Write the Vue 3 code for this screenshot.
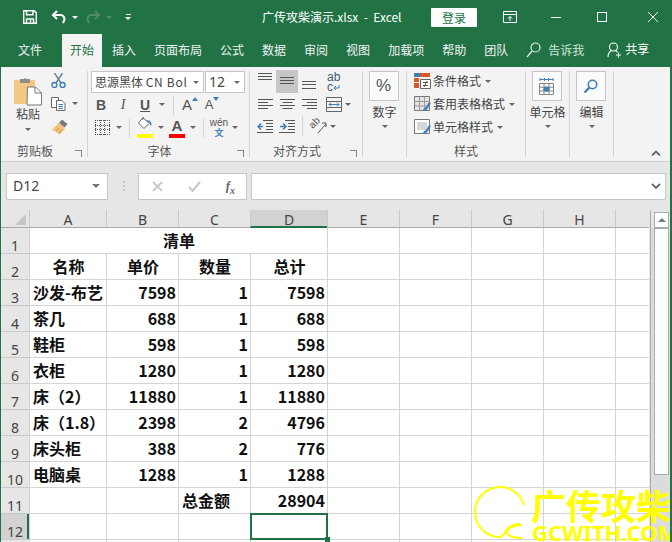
<template>
  <div class="window">
    <!-- title bar -->
    <div class="titlebar">
      <svg class="qa-save" width="16" height="16" viewBox="0 0 16 16" fill="none" stroke="#fff" stroke-width="1.4">
        <path d="M1.7 1.7h10.6l2 2v10.6H1.7z" />
        <path d="M4.5 1.7v4h6.5v-4M4.5 14.3V10h7v4.3" />
        <path d="M8.5 11v2.4" />
      </svg>
      <svg class="qa-undo" width="16" height="14" viewBox="0 0 16 14" fill="none" stroke="#fff" stroke-width="2">
        <path d="M6 1 2 5l4 4" />
        <path d="M2.5 5h7a4 4 0 0 1 3.6 5.6L12 13" />
      </svg>
      <span class="qa-caret"></span>
      <svg class="qa-redo" width="16" height="14" viewBox="0 0 16 14" fill="none" stroke="#4f8a6b" stroke-width="2">
        <path d="m10 1 4 4-4 4" />
        <path d="M13.5 5h-7a4 4 0 0 0-3.6 5.6L4 13" />
      </svg>
      <span class="qa-caret dim"></span>
      <span class="qa-more"><i></i><b></b></span>
      <span class="doc-title">广传攻柴演示.xlsx&nbsp;&nbsp;-&nbsp;&nbsp;Excel</span>
      <button class="login">登录</button>
      <svg class="win-ribbon" width="14" height="12" viewBox="0 0 14 12" fill="none" stroke="#fff">
        <path d="M.5.5h13v11H.5zM.5 3.500h13" />
        <path d="M7 10V5.500M5 7.500l2-2 2 2" />
      </svg>
      <span class="win-min"></span>
      <span class="win-max"></span>
      <svg class="win-close" width="12" height="12" viewBox="0 0 12 12" stroke="#fff"><path d="m1 1 10 10M11 1 1 11" /></svg>
    </div>

    <!-- tabs -->
    <div class="tabs">
      <span
        v-for="tab in tabs"
        :key="tab"
        class="tab"
        :class="{ active: tab === '开始', file: tab === '文件' }"
      >{{ tab }}</span>
      <svg class="tell-icon" width="15" height="16" viewBox="0 0 15 16" fill="none" stroke="#e6efe9" stroke-width="1.2">
        <circle cx="9.500" cy="5.500" r="4.500" />
        <path d="M6.200 9 1 15" />
      </svg>
      <span class="tell">告诉我</span>
      <svg class="share-icon" width="15" height="16" viewBox="0 0 15 16" fill="none" stroke="#fff" stroke-width="1.1">
        <circle cx="6.500" cy="5" r="4" />
        <path d="M1 15c0-3.500 1.800-5.500 3.500-6.500M8.500 8.500c.8.4 1.500 1 2 1.800M9 13h5M11.500 10.500v5" />
      </svg>
      <span class="share">共享</span>
    </div>

    <!-- ribbon -->
    <div class="ribbon">
      <section class="group g-clip">
        <div class="group-body clip-body">
          <div class="paste">
            <svg width="30" height="30" viewBox="0 0 30 30">
              <path d="M1 4h21v24H1z" fill="#f2c884" />
              <path d="M7 3h3.500a2 2 0 0 1 3 0H17v4H7V3z" fill="#8d8d8d" />
              <path d="M14.500 11h8l6 6v12h-14.500z" fill="#fff" stroke="#777" />
              <path d="M22 11v6h6.500" fill="none" stroke="#777" />
            </svg>
            <span class="big-label">粘贴</span>
            <span class="caret paste-caret"></span>
          </div>
          <div class="clip-tools">
            <svg width="15" height="15" viewBox="0 0 15 15" fill="none" stroke="#3f7fb5" stroke-width="1.400">
              <path d="M3.500 0 10 10M11.500 0 5 10" stroke="#6b7f90" />
              <circle cx="3.400" cy="12" r="2.500" />
              <circle cx="11.600" cy="12" r="2.500" />
            </svg>
            <div class="copy-row">
              <svg width="15" height="15" viewBox="0 0 15 15" fill="#fff" stroke="#666">
                <path d="M.5 1.500h7v10h-7z" />
                <path d="M5.500 4.500h5.500l3 3v7h-8.500z" />
                <path d="M7.500 8.500h4.500M7.500 10.500h4.500M7.500 12.500h4.500" stroke="#3f7fb5" />
              </svg>
              <span class="caret"></span>
            </div>
            <svg width="17" height="16" viewBox="0 0 17 16">
              <path d="M11 0.500 16.500 5 13.500 8.500 8 4z" fill="#7a7a7a" />
              <path d="M7 3.500 14 9.500 9 15.500 0.500 10.500c2-.5 3-1 3-3 1.500.5 2.500-1 3.500-4z" fill="#f2c27a" />
              <path d="M5 12l3-3M8 14l2.500-3.500" stroke="#c69a52" fill="none" />
            </svg>
          </div>
        </div>
        <div class="group-label with-launcher">剪贴板<i class="launcher"></i></div>
      </section>

      <section class="group g-font">
        <div class="group-body">
          <div class="font-row">
            <div class="select font-name"><span>思源黑体 <em>CN Bold</em></span><i class="caret"></i></div>
            <div class="select font-size"><span>12</span><i class="caret"></i></div>
          </div>
          <div class="tool-row first">
            <span class="btn letter bold">B</span>
            <span class="btn letter italic">I</span>
            <span class="btn letter underline">U</span>
            <span class="caret-cell"><i class="caret"></i></span>
            <span class="sep"></span>
            <span class="btn grow">A<svg width="6" height="4" viewBox="0 0 6 4"><path d="M0 4 3 0l3 4z" fill="#3f7fb5" /></svg></span>
            <span class="btn shrink">A<svg width="6" height="4" viewBox="0 0 6 4"><path d="m0 0 3 4 3-4z" fill="#3f7fb5" /></svg></span>
          </div>
          <div class="tool-row second">
            <span class="btn">
              <svg width="15" height="15" viewBox="0 0 15 15" fill="none" stroke="#555" stroke-dasharray="1 1">
                <path d="M0 .5h15M0 14.500h15M.5 0v15M14.500 0v15M0 5.500h15M0 9.500h15M5.500 0v15M9.500 0v15" />
              </svg>
            </span>
            <span class="caret-cell"><i class="caret"></i></span>
            <span class="sep narrow"></span>
            <span class="btn color-btn">
              <svg width="16" height="13" viewBox="0 0 16 13">
                <path d="M6 0.500 12 6.500 7 11.500 1.500 6z" fill="#fff" stroke="#666" />
                <path d="M5.500 3 6.500 0.500" stroke="#666" />
                <path d="M9 3.500c3-1 5 .5 5.500 3.500.2 1.500-1.500 2-1.500.5 0-1-.5-2-1.500-2.500z" fill="#3f7fb5" />
              </svg>
              <i class="swatch yellow"></i>
            </span>
            <span class="caret-cell"><i class="caret"></i></span>
            <span class="btn color-btn">
              <span class="a-color">A</span>
              <i class="swatch red"></i>
            </span>
            <span class="caret-cell"><i class="caret"></i></span>
            <span class="sep narrow"></span>
            <span class="btn wen"><small>wén</small><b>文</b></span>
            <span class="caret-cell"><i class="caret"></i></span>
          </div>
        </div>
        <div class="group-label with-launcher">字体<i class="launcher"></i></div>
      </section>

      <section class="group g-align">
        <div class="group-body align-body">
          <div class="align-row top-row">
            <span class="btn">
              <svg width="14" height="17" viewBox="0 0 14 17" stroke="#555"><path d="M0 .5h14M0 3.500h14M0 6.500h14" /></svg>
            </span>
            <span class="btn on">
              <svg width="14" height="9" viewBox="0 0 14 9" stroke="#555"><path d="M0 .5h14M0 3.500h14M0 6.500h14" /></svg>
            </span>
            <span class="btn">
              <svg width="14" height="17" viewBox="0 0 14 17" stroke="#555"><path d="M0 8.500h14M0 11.500h14M0 15.500h14" /></svg>
            </span>
            <span class="wrap-text">ab<br />c<svg width="7" height="6" viewBox="0 0 7 6" fill="none" stroke="#3f7fb5"><path d="M6 0v3H1M3 1 1 3l2 2" /></svg></span>
          </div>
          <div class="align-row">
            <span class="btn"><svg width="15" height="10" viewBox="0 0 15 10" stroke="#555"><path d="M0 .5h15M0 3.500h10M0 6.500h15M0 9.500h10" /></svg></span>
            <span class="btn"><svg width="15" height="10" viewBox="0 0 15 10" stroke="#555"><path d="M0 .5h15M2.500 3.500h10M0 6.500h15M2.500 9.500h10" /></svg></span>
            <span class="btn"><svg width="15" height="10" viewBox="0 0 15 10" stroke="#555"><path d="M0 .5h15M5 3.500h10M0 6.500h15M5 9.500h10" /></svg></span>
            <span class="merge">
              <svg width="16" height="15" viewBox="0 0 16 15" fill="none" stroke="#666">
                <path d="M.5.500h15v14H.5zM.5 4.500h15M.5 10.500h15" />
                <path d="M3 7.500h10M5 5.500l-2 2 2 2M11 5.500l2 2-2 2" stroke="#3f7fb5" />
              </svg>
            </span>
            <span class="caret-cell"><i class="caret"></i></span>
          </div>
          <div class="align-row">
            <span class="btn">
              <svg width="16" height="13" viewBox="0 0 16 13" fill="none" stroke="#555">
                <path d="M6 .5h10M9 3.500h7M9 6.500h7M9 9.500h7M0 12.500h16" />
                <path d="M6 6.500H1.500M4 3.500l-3 3 3 3" stroke="#3f7fb5" stroke-width="1.500" />
              </svg>
            </span>
            <span class="btn">
              <svg width="16" height="13" viewBox="0 0 16 13" fill="none" stroke="#555">
                <path d="M6 .5h10M9 3.500h7M9 6.500h7M9 9.500h7M0 12.500h16" />
                <path d="M1 6.500h5M4 3.500l3 3-3 3" stroke="#3f7fb5" stroke-width="1.500" />
              </svg>
            </span>
            <span class="sep tight"></span>
            <span class="orient">
              <span class="orient-ab">ab</span>
              <svg width="18" height="16" viewBox="0 0 18 16" fill="none" stroke="#555">
                <path d="M9 15 17 6M13 5h4v4" />
              </svg>
            </span>
            <span class="caret-cell"><i class="caret"></i></span>
          </div>
        </div>
        <div class="group-label with-launcher">对齐方式<i class="launcher"></i></div>
      </section>

      <section class="group g-num">
        <div class="group-body stack">
          <div class="big-box"><span class="percent">%</span></div>
          <span class="big-label">数字</span>
          <span class="caret"></span>
        </div>
      </section>

      <section class="group g-style">
        <div class="group-body style-rows">
          <div class="style-row">
            <svg width="17" height="16" viewBox="0 0 17 16">
              <path d="M0 0h6v4H0z" fill="#3f7fb5" />
              <path d="M6 0h10v4H6z" fill="#d9572b" />
              <path d="M0 5h5v4H0zM0 10h5v5H0z" fill="#d9572b" />
              <path d="M6.500 6.500h10v9h-10z" fill="#fff" stroke="#666" />
              <path d="M9 9.500h5M9 12.500h5M10 14l3-6" stroke="#555" fill="none" />
            </svg>
            <span>条件格式</span><i class="caret"></i>
          </div>
          <div class="style-row">
            <svg width="17" height="16" viewBox="0 0 17 16" fill="none">
              <path d="M.5.500h15v14H.5z" fill="#e4e4e4" stroke="#777" />
              <path d="M5.500.500v14M10.500.500v14M.5 5.500h15M.5 10h15" stroke="#999" />
              <path d="M9 15c0-3 2-3 3-4l3-5 2 1-3 5c-1 1-2 3-5 3z" fill="#3f7fb5" />
            </svg>
            <span>套用表格格式</span><i class="caret"></i>
          </div>
          <div class="style-row">
            <svg width="17" height="16" viewBox="0 0 17 16" fill="none">
              <path d="M.5.500h15v14H.5z" fill="#fff" stroke="#777" />
              <path d="M3 3h10v8H3z" fill="#d6d6d6" />
              <path d="M9 15c0-3 2-3 3-4l3-5 2 1-3 5c-1 1-2 3-5 3z" fill="#3f7fb5" />
            </svg>
            <span>单元格样式</span><i class="caret"></i>
          </div>
        </div>
        <div class="group-label">样式</div>
      </section>

      <section class="group g-cell">
        <div class="group-body stack">
          <div class="big-box">
            <svg width="15" height="17" viewBox="0 0 15 17" fill="none" stroke="#888">
              <path d="M.5 5.500h14v11H.5zM5 5.500v11M10 5.500v11M.5 9.200h14M.5 13h14" />
              <path d="M5 9.200h5V13H5z" fill="#3f7fb5" stroke="#3f7fb5" />
              <path d="M1 1.500h13M1 0v3M5.500 0v3M9.500 0v3M14 0v3" stroke="#3f7fb5" />
            </svg>
          </div>
          <span class="big-label">单元格</span>
          <span class="caret"></span>
        </div>
      </section>

      <section class="group g-edit">
        <div class="group-body stack">
          <div class="big-box">
            <svg width="15" height="15" viewBox="0 0 15 15" fill="none" stroke="#3f7fb5" stroke-width="1.600">
              <circle cx="9.500" cy="5.500" r="4.200" />
              <path d="M6.500 8.500 1.500 13.500" stroke-width="2.400" />
            </svg>
          </div>
          <span class="big-label">编辑</span>
          <span class="caret"></span>
        </div>
      </section>

      <svg class="collapse" width="10" height="6" viewBox="0 0 10 6" fill="none" stroke="#666" stroke-width="1.800"><path d="m1 5.500 4-4 4 4" /></svg>
    </div>

    <!-- formula bar -->
    <div class="formula-bar">
      <div class="name-box"><span>D12</span><i class="name-caret"></i></div>
      <span class="grip"><i></i><i></i><i></i></span>
      <div class="fx-box">
        <svg width="11" height="11" viewBox="0 0 11 11" stroke="#c8c8c8" stroke-width="1.800"><path d="m1 1 9 9M10 1l-9 9" /></svg>
        <svg width="13" height="11" viewBox="0 0 13 11" fill="none" stroke="#c8c8c8" stroke-width="2"><path d="m1 6 3.500 4L12 1" /></svg>
        <span class="fx">f<sub>x</sub></span>
      </div>
      <div class="fx-input">
        <svg width="10" height="7" viewBox="0 0 10 7" fill="none" stroke="#666" stroke-width="1.800"><path d="m1 1 4 4 4-4" /></svg>
      </div>
    </div>

    <!-- sheet -->
    <div class="sheet-wrap">
      <div class="sheet">
        <div class="corner"><i></i></div>
        <div
          v-for="col in columns"
          :key="col"
          class="col-head"
          :class="{ current: col === 'D' }"
        >{{ col.trim() }}</div>

        <template v-for="(row, r) in rows" :key="r">
          <div class="row-head" :class="{ current: r === 11 }">{{ r < 12 ? r + 1 : '' }}</div>
          <template v-if="r === 0">
            <div class="cell title-cell">清单</div>
          </template>
          <template v-else>
            <div
              v-for="(val, c) in row"
              :key="c"
              class="cell"
              :class="cellClass(val, r, c)"
            >{{ val }}</div>
          </template>
          <div v-for="n in blankCols" :key="'b' + n" class="cell"></div>
        </template>
      </div>

      <div class="scrollbar">
        <div class="scroll-btn"><i></i></div>
        <div class="scroll-track"><div class="scroll-thumb"></div></div>
      </div>
    </div>

    <!-- site watermark over the sheet -->
    <div class="watermark">
      <svg class="wm-logo" width="56" height="56" viewBox="0 0 56 56" fill="none" stroke="#ff0" stroke-width="2">
        <path d="M52 19A25 25 0 1 0 27 51c5 0 5-4 8-8 3-3 7-5 13-5" />
        <path d="M50 39c-8 0-15 3-15 7 0 4 7 6 15 6" />
      </svg>
      <div class="wm-cn">广传攻柴</div>
      <div class="wm-en">GCWITH.COM</div>
    </div>
  </div>
</template>

<script setup>
const tabs = ['文件', '开始', '插入', '页面布局', '公式', '数据', '审阅', '视图', '加载项', '帮助', '团队']
// the ninth column is only partly in view, its letter is cut away
const columns = ['A', 'B', 'C', 'D', 'E', 'F', 'G', 'H', ' ']

const blankCols = 5

const rows = [
  ['清单'],
  ['名称', '单价', '数量', '总计'],
  ['沙发-布艺', 7598, 1, 7598],
  ['茶几', 688, 1, 688],
  ['鞋柜', 598, 1, 598],
  ['衣柜', 1280, 1, 1280],
  ['床（2）', 11880, 1, 11880],
  ['床（1.8）', 2398, 2, 4796],
  ['床头柜', 388, 2, 776],
  ['电脑桌', 1288, 1, 1288],
  ['', '', '总金额', 28904],
  ['', '', '', ''],
  ['', '', '', '']
]

function cellClass(val, r, c) {
  return {
    head: r === 1,
    num: typeof val === 'number',
    selected: r === 11 && c === 3
  }
}
</script>

<style>
html,
body {
  margin: 0;
  overflow: hidden;
}
</style>

<style scoped>
.window {
  position: relative;
  width: 672px;
  height: 542px;
  overflow: hidden;
  background: #e6e6e6;
  font-family: "Noto Sans CJK SC", "Noto Sans", sans-serif;
  font-size: 12px;
  color: #444;
  box-sizing: border-box;
  border-left: 1px solid #217346;
  border-right: 2px solid #217346;
}

i {
  font-style: normal;
}

.caret {
  display: inline-block;
  flex: none;
  width: 0;
  height: 0;
  border-left: 3px solid transparent;
  border-right: 3px solid transparent;
  border-top: 3px solid #666;
}

/* title bar */
.titlebar {
  display: flex;
  align-items: center;
  height: 34px;
  margin: 0 -2px 0 -1px;
  background: #217346;
  color: #fff;
}

.qa-save {
  margin-left: 22px;
}

.qa-undo {
  margin-left: 13px;
}

.qa-caret {
  margin-left: 5px;
  border-left: 3px solid transparent;
  border-right: 3px solid transparent;
  border-top: 3px solid #fff;
}

.qa-caret.dim {
  border-top-color: #4f8a6b;
}

.qa-redo {
  margin-left: 7px;
}

.qa-more {
  display: flex;
  flex-direction: column;
  align-items: center;
  gap: 2px;
  margin-left: 13px;
}

.qa-more i {
  width: 5px;
  height: 1px;
  background: #fff;
}

.qa-more b {
  border-left: 3px solid transparent;
  border-right: 3px solid transparent;
  border-top: 3px solid #fff;
}

.doc-title {
  width: 146px;
  margin-left: 131px;
  white-space: nowrap;
  font-size: 12px;
  line-height: 16px;
}

.login {
  width: 46px;
  height: 19px;
  margin-left: 23px;
  padding: 0;
  border: 0;
  border-radius: 1px;
  background: #fff;
  color: #217346;
  font: 12px/19px "Noto Sans CJK SC", sans-serif;
}

.win-ribbon {
  margin-left: 26px;
}

.win-min {
  width: 10px;
  height: 1px;
  margin-left: 34px;
  background: #fff;
}

.win-max {
  width: 8px;
  height: 8px;
  margin-left: 36px;
  border: 1px solid #fff;
}

.win-close {
  margin-left: 40px;
}

/* tabs */
.tabs {
  display: flex;
  align-items: stretch;
  height: 33px;
  margin: 0 -2px 0 -1px;
  padding-left: 10px;
  background: #217346;
  color: #f2f2f2;
}

.tab {
  display: flex;
  align-items: center;
  padding: 0 8px 1px;
  margin-right: 2px;
  line-height: 16px;
}

.tab.file {
  margin-right: 12px;
}

.tab.active {
  background: #f3f3f3;
  color: #217346;
}

.tell-icon {
  align-self: center;
  margin: -2px 0 0 8px;
}

.tell {
  align-self: center;
  margin: 0 0 0 7px;
  padding-bottom: 1px;
  color: #d5e5da;
  line-height: 16px;
}

.share-icon {
  align-self: center;
  margin: -2px 0 0 23px;
}

.share {
  align-self: center;
  margin-left: 3px;
  padding-bottom: 4px;
  color: #fff;
  line-height: 16px;
}

/* ribbon */
.ribbon {
  position: relative;
  display: flex;
  height: 95px;
  box-sizing: border-box;
  padding-top: 4px;
  background: #f3f3f3;
  border-bottom: 1px solid #cfcfcf;
}

.group {
  display: flex;
  flex-direction: column;
  flex: none;
  box-sizing: border-box;
  height: 86px;
  border-right: 1px solid #d4d4d4;
}

.group-body {
  flex: 1;
  min-height: 0;
}

.group-label {
  position: relative;
  height: 13px;
  line-height: 13px;
  text-align: center;
  color: #555;
}

.with-launcher {
  padding-right: 18px;
}

.launcher {
  position: absolute;
  right: 5px;
  bottom: 0;
  width: 6px;
  height: 6px;
  border-left: 1px solid #888;
  border-bottom: 1px solid #888;
  transform: scaleX(-1) scaleY(-1);
}

.big-label {
  font-size: 12px;
  line-height: 16px;
  color: #444;
  white-space: nowrap;
}

.g-clip {
  width: 87px;
}

.clip-body {
  display: flex;
  padding-left: 12px;
}

.paste {
  display: flex;
  flex-direction: column;
  align-items: center;
  width: 30px;
  padding-top: 5px;
}

.paste-caret {
  margin-top: 6px;
}

.clip-tools {
  display: flex;
  flex-direction: column;
  gap: 8px;
  padding: 2px 0 0 8px;
}

.copy-row {
  display: flex;
  align-items: center;
  gap: 6px;
}

.g-font {
  width: 162px;
}

.font-row {
  display: flex;
  gap: 1px;
  padding-left: 3px;
}

.select {
  display: flex;
  align-items: center;
  box-sizing: border-box;
  height: 22px;
  padding: 0 4px 0 3px;
  background: #fff;
  border: 1px solid #c6c6c6;
  overflow: hidden;
}

.select span {
  flex: 1;
  overflow: hidden;
  white-space: nowrap;
  line-height: 16px;
}

.select em {
  font-style: normal;
  letter-spacing: 0.7px;
}

.font-name {
  width: 113px;
}

.font-name .caret {
  margin-left: 5px;
}

.font-size {
  width: 40px;
}

.font-size span {
  font: 14px/16px "Noto Sans", sans-serif;
}

.tool-row {
  display: flex;
  align-items: center;
  height: 23px;
  padding-left: 2px;
}

.tool-row.second {
  padding-left: 3px;
}

.btn {
  display: flex;
  align-items: center;
  justify-content: center;
  flex: none;
  width: 22px;
  height: 22px;
}

.btn.on {
  background: #c6c6c6;
}

.top-row .btn {
  height: 23px;
}

.caret-cell {
  display: flex;
  align-items: center;
  justify-content: center;
  flex: none;
  width: 12px;
}

.sep {
  flex: none;
  width: 1px;
  height: 20px;
  margin: 0 5px;
  background: #d4d4d4;
}

.sep.narrow {
  margin: 0 5px 0 4px;
}

.sep.tight {
  margin: 0 6px 0 4px;
}

.letter {
  font: 14px/20px "Liberation Sans", sans-serif;
  color: #555;
}

.bold {
  font-weight: 700;
}

.italic {
  font-family: "Liberation Serif", serif;
  font-style: italic;
}

.underline {
  font-weight: 700;
  text-decoration: underline;
}

.grow,
.shrink {
  align-items: flex-start;
  font: 15px/22px "Liberation Sans", sans-serif;
  color: #555;
}

.shrink {
  font-size: 13px;
}

.grow svg,
.shrink svg {
  margin-top: 3px;
}

.color-btn {
  position: relative;
  width: 20px;
  align-items: flex-start;
}

.a-color {
  font: 700 15px/17px "Liberation Sans", sans-serif;
  color: #555;
}

.swatch {
  position: absolute;
  left: 2px;
  right: 2px;
  bottom: 1px;
  height: 4px;
}

.yellow {
  background: #ff0;
}

.red {
  background: #f00;
}

.wen {
  flex-direction: column;
  justify-content: flex-start;
  width: 20px;
  padding-top: 1px;
  box-sizing: border-box;
}

.wen small {
  height: 10px;
  font: 10px/10px "Liberation Sans", sans-serif;
  color: #555;
}

.wen b {
  height: 10px;
  font-size: 9px;
  line-height: 10px;
  color: #3f7fb5;
}

.g-align {
  width: 113px;
}

.align-body {
  margin-top: -1px;
}

.align-row {
  display: flex;
  align-items: center;
  height: 22px;
  padding-left: 4px;
}

.align-row.top-row {
  height: 23px;
}

.wrap-text {
  width: 16px;
  margin-left: 7px;
  font: 12px/10px "Liberation Sans", sans-serif;
  color: #4a5a68;
}

.merge {
  display: flex;
  margin-left: 6px;
}

.orient {
  position: relative;
  display: flex;
}

.orient-ab {
  position: absolute;
  left: 0;
  top: 0;
  font: 10px/10px "Liberation Sans", sans-serif;
  color: #555;
  transform: rotate(-45deg);
}

.g-num,
.g-cell,
.g-edit {
  width: 44px;
}

.g-style {
  width: 119px;
}

.stack {
  display: flex;
  flex-direction: column;
  align-items: center;
}

.big-box {
  display: flex;
  align-items: center;
  justify-content: center;
  flex: none;
  box-sizing: border-box;
  width: 30px;
  height: 30px;
  margin-left: -2px;
  background: #fafafa;
  border: 1px solid #c6c6c6;
}

.stack .big-label {
  margin-top: 3px;
}

.stack .caret {
  margin-top: 5px;
}

.percent {
  font: 17px/20px "Liberation Sans", sans-serif;
  color: #555;
}

.style-rows {
  display: flex;
  flex-direction: column;
  gap: 7px;
  padding: 2px 0 0 7px;
}

.style-row {
  display: flex;
  align-items: center;
  height: 16px;
  white-space: nowrap;
  line-height: 16px;
}

.style-row svg {
  flex: none;
  margin-right: 2px;
}

.style-row .caret {
  margin-left: 4px;
}

.collapse {
  position: absolute;
  right: 9px;
  bottom: 5px;
}

/* formula bar */
.formula-bar {
  display: flex;
  align-items: center;
  height: 48px;
  box-sizing: border-box;
  padding: 0 4px 0 5px;
}

.name-box,
.fx-box,
.fx-input {
  display: flex;
  align-items: center;
  box-sizing: border-box;
  height: 27px;
  background: #fff;
  border: 1px solid #c6c6c6;
}

.name-box {
  justify-content: space-between;
  width: 102px;
  padding: 0 7px 0 6px;
  font: 14px/16px "Noto Sans", sans-serif;
}

.name-caret {
  border-left: 4px solid transparent;
  border-right: 4px solid transparent;
  border-top: 4px solid #777;
}

.grip {
  display: flex;
  flex-direction: column;
  gap: 2px;
  margin: 0 13px 0 15px;
}

.grip i {
  width: 2px;
  height: 2px;
  background: #c4c4c4;
}

.fx-box {
  justify-content: space-between;
  width: 109px;
  padding: 0 11px 0 13px;
}

.fx {
  font: italic 700 13px/16px "Liberation Serif", serif;
  color: #666;
}

.fx sub {
  font-size: 10px;
  line-height: 0;
}

.fx-input {
  flex: 1;
  justify-content: flex-end;
  margin-left: 4px;
  padding-right: 4px;
}

/* sheet */
.sheet-wrap {
  display: flex;
  height: 332px;
}

.sheet {
  display: grid;
  flex: none;
  box-sizing: border-box;
  grid-template-columns: 28px 77px 72px 72px 77px 72px 72px 72px 72px 34px;
  grid-auto-rows: 26px;
  grid-template-rows: 18px;
  width: 649px;
  overflow: hidden;
  align-content: start;
}

.corner {
  position: relative;
  border-bottom: 1px solid #a9a9a9;
  box-sizing: border-box;
}

.corner i {
  position: absolute;
  right: 3px;
  bottom: 2px;
  width: 0;
  height: 0;
  border-left: 11px solid transparent;
  border-bottom: 11px solid #c6c6c6;
}

.col-head {
  box-sizing: border-box;
  border-left: 1px solid #c9c9c9;
  border-bottom: 1px solid #a9a9a9;
  text-align: center;
  font: 14px/19px "Noto Sans", sans-serif;
  color: #444;
}

.col-head.current {
  background: #d2d2d2;
  border-bottom: 2px solid #217346;
}

.row-head {
  display: flex;
  align-items: flex-end;
  justify-content: center;
  box-sizing: border-box;
  border-bottom: 1px solid #c9c9c9;
  font: 14px/15px "Noto Sans", sans-serif;
  color: #444;
}

.row-head.current {
  background: #d2d2d2;
  box-shadow: inset -2px 0 0 #217346;
}

.cell {
  position: relative;
  box-sizing: border-box;
  padding: 0 2px 0 3px;
  background: #fff;
  border-left: 1px solid #d4d4d4;
  border-bottom: 1px solid #d4d4d4;
  font-size: 16px;
  font-weight: 700;
  line-height: 25px;
  color: #111;
  white-space: nowrap;
}

.title-cell {
  grid-column: span 4;
  text-align: center;
}

.head {
  text-align: center;
}

.num {
  text-align: right;
}

.selected {
  z-index: 1;
}

.selected::after {
  content: "";
  position: absolute;
  left: -1px;
  top: -1px;
  right: -1px;
  bottom: -1px;
  border: 2px solid #217346;
  pointer-events: none;
}

.selected::before {
  content: "";
  position: absolute;
  right: -3px;
  bottom: -3px;
  width: 5px;
  height: 5px;
  background: #217346;
  z-index: 1;
}

.scrollbar {
  display: flex;
  flex-direction: column;
  flex: none;
  box-sizing: border-box;
  width: 20px;
  border-left: 1px solid #a9a9a9;
}

.scroll-btn {
  display: flex;
  align-items: center;
  justify-content: center;
  flex: none;
  box-sizing: border-box;
  width: 15px;
  height: 16px;
  margin: 2px 0 0 3px;
  background: #fff;
  border: 1px solid #ababab;
}

.scroll-btn i {
  border-left: 4px solid transparent;
  border-right: 4px solid transparent;
  border-bottom: 4px solid #777;
}

.scroll-track {
  flex: 1;
  padding: 0 1px 0 3px;
  background: #dcdcdc;
}

.scroll-thumb {
  box-sizing: border-box;
  width: 15px;
  height: 247px;
  background: #fff;
  border: 1px solid #ababab;
}

/* watermark */
.watermark {
  position: absolute;
  left: 471px;
  top: 486px;
  width: 201px;
  height: 56px;
  color: #ff0;
  font-weight: 700;
  pointer-events: none;
  overflow: hidden;
}

.wm-logo {
  position: absolute;
  left: 0;
  top: 0;
}

.wm-cn {
  position: absolute;
  left: 59px;
  top: 0;
  font-size: 35px;
  line-height: 38px;
  white-space: nowrap;
}

.wm-en {
  position: absolute;
  left: 60px;
  top: 34px;
  font: 700 22px/24px "Noto Sans", sans-serif;
  white-space: nowrap;
}
</style>
